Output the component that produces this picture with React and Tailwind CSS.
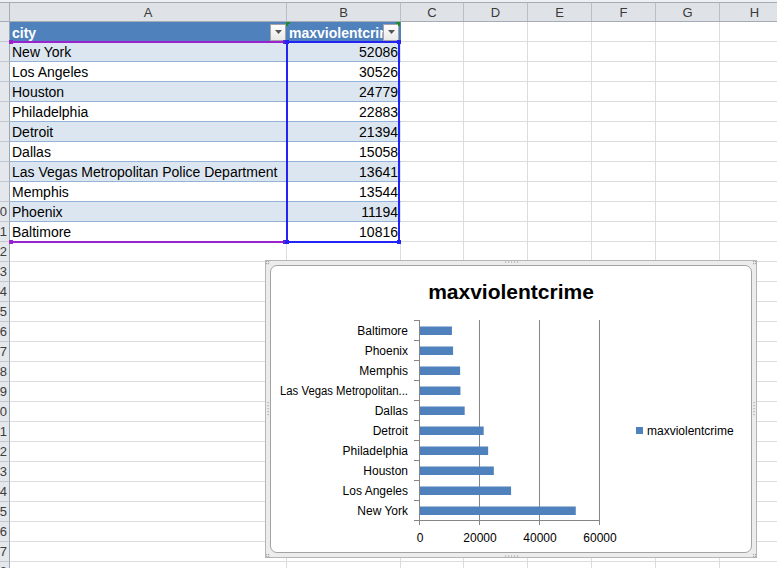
import React from "react";

const cols = [
  { l: "A", w: "w-[277px]" },
  { l: "B", w: "w-[114px]" },
  { l: "C", w: "w-[63px]" },
  { l: "D", w: "w-[64px]" },
  { l: "E", w: "w-[64px]" },
  { l: "F", w: "w-[64px]" },
  { l: "G", w: "w-[64px]" },
  { l: "H", w: "w-[70px]" },
];

const data = [
  ["New York", 52086],
  ["Los Angeles", 30526],
  ["Houston", 24779],
  ["Philadelphia", 22883],
  ["Detroit", 21394],
  ["Dallas", 15058],
  ["Las Vegas Metropolitan Police Department", 13641],
  ["Memphis", 13544],
  ["Phoenix", 11194],
  ["Baltimore", 10816],
];

const cats = [
  ["Baltimore", 10816],
  ["Phoenix", 11194],
  ["Memphis", 13544],
  ["Las Vegas Metropolitan...", 13641],
  ["Dallas", 15058],
  ["Detroit", 21394],
  ["Philadelphia", 22883],
  ["Houston", 24779],
  ["Los Angeles", 30526],
  ["New York", 52086],
];

function DropBtn({ cls }) {
  return (
    <div
      className={`shrink-0 w-[16px] h-[17px] border border-[#a4a4a4] bg-gradient-to-b from-white to-[#e9e9e9] flex items-center justify-center ${cls}`}
    >
      <svg width="7" height="4" viewBox="0 0 7 4">
        <path d="M0 0 H7 L3.5 4 Z" fill="#555" />
      </svg>
    </div>
  );
}

function TableCell({ n, ci, w }) {
  if (n === 1) {
    return (
      <div
        className={`${w} shrink-0 flex items-center bg-[#4f81bd] text-white font-bold text-[14px] leading-[20px]`}
      >
        <div className="flex-1 overflow-hidden whitespace-nowrap pl-[2px] pt-[1px]">
          {ci === 0 ? "city" : "maxviolentcrime"}
        </div>
        <DropBtn cls={ci === 0 ? "mr-[1px]" : "mr-[2px]"} />
      </div>
    );
  }
  const row = data[n - 2];
  const bg = n % 2 === 0 ? "bg-[#dce6f1]" : "bg-white";
  if (ci === 0) {
    return (
      <div
        className={`${w} shrink-0 ${bg} border-b border-[#95b3d7] pl-[2px] pt-[2px] text-[14px] leading-[17px] text-black whitespace-nowrap overflow-hidden`}
      >
        {row[0]}
      </div>
    );
  }
  return (
    <div
      className={`${w} shrink-0 ${bg} border-b border-[#95b3d7] pr-[3px] pt-[2px] text-right text-[14px] leading-[17px] text-black`}
    >
      {row[1]}
    </div>
  );
}

function Row({ n }) {
  return (
    <div className="flex h-[20px]">
      <div className="w-[10px] shrink-0 flex justify-end pr-[2px] pt-[1px] bg-[#e4e7eb] border-r border-b border-r-[#9ea6b0] border-b-[#c3c8ce] text-[13px] leading-[18px] text-[#3c3c3c] overflow-hidden whitespace-nowrap">
        {n >= 10 ? String(n) : ""}
      </div>
      {cols.map((c, ci) =>
        n <= 11 && ci < 2 ? (
          <TableCell key={c.l} n={n} ci={ci} w={c.w} />
        ) : (
          <div
            key={c.l}
            className={`${c.w} shrink-0 border-r border-b border-[#dadcdd]`}
          />
        )
      )}
    </div>
  );
}

function Chart() {
  const gray = "#868686";
  const dots = [];
  const corners = [
    [266, 261],
    [753, 261],
    [266, 554],
    [753, 554],
  ];
  corners.forEach(([x, y], i) => {
    [
      [0, 0],
      [2, 0],
      [0, 2],
      [2, 2],
    ].forEach(([dx, dy], j) =>
      dots.push(
        <rect key={`c${i}${j}`} x={x + dx} y={y + dy} width="1.2" height="1.2" fill="#a8a8a8" />
      )
    );
  });
  [505, 508, 511, 514, 517].forEach((x, i) => {
    dots.push(<rect key={`t${i}`} x={x} y={261.5} width="1.2" height="1.2" fill="#a8a8a8" />);
    dots.push(<rect key={`b${i}`} x={x} y={555.5} width="1.2" height="1.2" fill="#a8a8a8" />);
  });
  [402, 405, 408, 411, 414].forEach((y, i) => {
    dots.push(<rect key={`l${i}`} x={267.5} y={y} width="1.2" height="1.2" fill="#a8a8a8" />);
    dots.push(<rect key={`r${i}`} x={753.5} y={y} width="1.2" height="1.2" fill="#a8a8a8" />);
  });

  return (
    <div className="absolute left-[265px] top-[260px] w-[492px] h-[298px] border border-[#b5b5b5] bg-[#ececec] p-[4px]">
      <div className="h-full rounded-[7px] border border-[#a3a3a3] bg-white" />
      <svg
        className="absolute left-[-1px] top-[-1px]"
        width="492"
        height="298"
        viewBox="265 260 492 298"
      >
        {dots}
        <text x="511" y="299" textAnchor="middle" fontSize="21" fontWeight="bold" fill="#000">
          maxviolentcrime
        </text>
        {[479.5, 539.5, 599.5].map((x) => (
          <line key={x} x1={x} y1="320" x2={x} y2="520" stroke={gray} strokeWidth="1" />
        ))}
        {cats.map(([name, v], i) => {
          const c = 330.5 + 20 * i;
          return (
            <g key={name}>
              <rect x="419.5" y={c - 4} width={v * 0.003} height="8.5" fill="#4f81bd" />
              {name.startsWith("Las") ? (
                <text
                  x="408"
                  y={c + 4.5}
                  textAnchor="end"
                  fontSize="12"
                  fill="#000"
                  textLength="128"
                  lengthAdjust="spacingAndGlyphs"
                >
                  {name}
                </text>
              ) : (
                <text x="408" y={c + 4.5} textAnchor="end" fontSize="12" fill="#000">
                  {name}
                </text>
              )}
            </g>
          );
        })}
        <line x1="419.5" y1="320" x2="419.5" y2="521" stroke={gray} />
        {Array.from({ length: 11 }, (_, k) => (
          <line key={k} x1="414" y1={320.5 + 20 * k} x2="419.5" y2={320.5 + 20 * k} stroke={gray} />
        ))}
        <line x1="419" y1="520.5" x2="600" y2="520.5" stroke={gray} />
        {[419.5, 479.5, 539.5, 599.5].map((x) => (
          <line key={x} x1={x} y1="520" x2={x} y2="525" stroke={gray} />
        ))}
        {[
          [420, "0"],
          [480, "20000"],
          [540, "40000"],
          [600, "60000"],
        ].map(([x, t]) => (
          <text key={t} x={x} y="542" textAnchor="middle" fontSize="12" fill="#000">
            {t}
          </text>
        ))}
        <rect x="636" y="427" width="7" height="7" fill="#4f81bd" />
        <text x="647" y="434.5" fontSize="12" fill="#000">
          maxviolentcrime
        </text>
      </svg>
    </div>
  );
}

function Handle({ cls }) {
  return <div className={`absolute w-[4px] h-[4px] ${cls}`} />;
}

function Selection() {
  return (
    <div className="absolute left-[10px] top-[41px] flex h-[202px] w-[390px] pointer-events-none">
      <div className="relative w-[276px] border-y-2 border-[#9b22cf]">
        <Handle cls="-left-px -top-[3px] bg-[#9b22cf]" />
        <Handle cls="-right-px -top-[3px] bg-[#6a1fd8]" />
        <Handle cls="-left-px -bottom-[3px] bg-[#9b22cf]" />
        <Handle cls="-right-px -bottom-[3px] bg-[#6a1fd8]" />
      </div>
      <div className="relative flex-1 border-2 border-[#2323f5]">
        <div className="absolute -left-[2px] -top-[21px] h-[4px] w-[4px] border-l-2 border-t-2 border-[#1e8c2e]" />
        <div className="absolute -right-[2px] -top-[21px] h-[4px] w-[4px] border-r-2 border-t-2 border-[#1e8c2e]" />
        <Handle cls="-left-[3px] -top-[3px] bg-[#2323f5]" />
        <Handle cls="-right-[3px] -top-[3px] bg-[#2323f5]" />
        <Handle cls="-left-[3px] -bottom-[3px] bg-[#2323f5]" />
        <Handle cls="-right-[3px] -bottom-[3px] bg-[#2323f5]" />
      </div>
    </div>
  );
}

export default function App() {
  return (
    <div className="relative w-[777px] h-[568px] overflow-hidden bg-white font-['Liberation_Sans',Arial,sans-serif]">
      <div className="h-[2px] bg-[#eef0f3]" />
      <div className="flex h-[20px] border-y border-[#a5acb5] bg-[#dfe3e8] text-[13px] leading-[19px] text-[#3a3a3a]">
        <div className="w-[10px] shrink-0 border-r border-[#a5acb5] bg-[#dfe3e8]" />
        {cols.map((c) => (
          <div key={c.l} className={`${c.w} shrink-0 border-r border-[#b9bfc7] text-center`}>
            {c.l}
          </div>
        ))}
      </div>
      {Array.from({ length: 28 }, (_, i) => (
        <Row key={i} n={i + 1} />
      ))}
      <Selection />
      <Chart />
    </div>
  );
}
